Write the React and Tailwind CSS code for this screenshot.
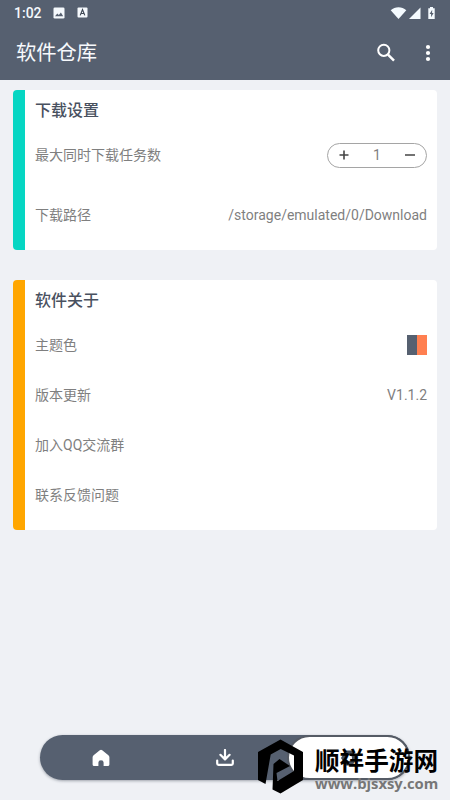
const aboutRows = [
  { label: '主题色', swatch: true },
  { label: '版本更新', value: 'V1.1.2' },
  { label: '加入QQ交流群' },
  { label: '联系反馈问题' },
];

function StatusBar() {
  return (
    <div className="flex h-[25px] items-center justify-between px-[14px]">
      <div className="flex items-center">
        <span className="w-[39px] text-[14px] leading-6 font-medium text-[#f5f9fd]">1:02</span>
        <svg className="h-3 w-3" viewBox="0 0 12 12">
          <rect x="0.5" y="0.5" width="11" height="11" rx="1.3" fill="#f5f9fd" />
          <path d="M2 9.2 4.3 6.4 5.8 8 7.9 5.6 10.2 9.2Z" fill="#566070" />
        </svg>
        <svg className="ml-3 h-[11px] w-[11px]" viewBox="0 0 11 11">
          <rect x="0.5" y="0.5" width="10" height="10" rx="1" fill="#f5f9fd" />
          <path d="M3.2 8.4 5.5 2.6 7.8 8.4M4 6.5h3" fill="none" stroke="#3f4855" strokeWidth="1.2" />
        </svg>
      </div>
      <svg className="h-3 w-[46px]" viewBox="0 0 46 12">
        <path d="M0.7 3.2C5-.8 12-.8 16.3 3.2L8.5 12Z" fill="#f5fbff" />
        <path d="M30.5 0.5V12H19Z" fill="#f5fbff" />
        <path d="M38.3 1.3h1.7V0h3v1.3h1.7V12h-6.4Z" fill="#f5fbff" />
        <path d="M42.2 2.8 39.6 7h1.5v3.2L43.6 6h-1.5Z" fill="#566070" />
      </svg>
    </div>
  );
}

function AppBar() {
  return (
    <header className="flex h-[55px] items-center justify-between pl-4 pr-5">
      <h1 className="text-[20.3px] leading-7 font-normal text-[#f7f9fc]">软件仓库</h1>
      <div className="flex items-center gap-7">
        <svg className="h-5 w-5" viewBox="0 0 20 20" fill="none" stroke="#fff">
          <circle cx="7.8" cy="7.3" r="5.6" strokeWidth="2" />
          <path d="m12 11.6 6 6" strokeWidth="2.4" />
        </svg>
        <svg className="-mr-2 h-5 w-[14px]" viewBox="0 0 14 20" fill="#fff">
          <circle cx="4" cy="4" r="2.1" />
          <circle cx="4" cy="10" r="2.1" />
          <circle cx="4" cy="16" r="2.1" />
        </svg>
      </div>
    </header>
  );
}

function Card({ accent, title, children }) {
  return (
    <section className="flex overflow-hidden rounded-[4px] bg-white">
      <div className={accent} />
      <div className="flex-1 px-[10px]">
        <h2 className="h-10 text-[16px] leading-[42px] font-medium text-[#49515f]">{title}</h2>
        {children}
      </div>
    </section>
  );
}

function Stepper() {
  return (
    <div className="flex h-[25px] w-[100px] items-center justify-between rounded-full border border-[#a5a5a5] px-[10px]">
      <svg className="h-3 w-3" viewBox="0 0 12 12">
        <path d="M1.5 6h9M6 1.5v9" stroke="#454545" strokeWidth="1.6" />
      </svg>
      <span className="pt-px">1</span>
      <svg className="h-3 w-3" viewBox="0 0 12 12">
        <path d="M1 6h10" stroke="#454545" strokeWidth="1.6" />
      </svg>
    </div>
  );
}

function BottomNav() {
  return (
    <nav className="flex h-[45px] w-[370px] items-center rounded-full bg-[#566070] shadow-[0_1px_3px_rgba(40,50,65,0.4)]">
      <div className="flex flex-1 justify-center">
        <svg className="mr-px h-[18px] w-[18px]" viewBox="0 0 18 18" fill="#fff">
          <path d="M9 .8Q9.6.8 10.2 1.3L16.4 6.2Q17.4 7 17.4 8.2V15.4Q17.4 17 15.8 17H11.6V13.4Q11.6 11.2 9 11.2Q6.4 11.2 6.4 13.4V17H2.2Q.6 17 .6 15.4V8.2Q.6 7 1.6 6.2L7.8 1.3Q8.4.8 9 .8Z" />
        </svg>
      </div>
      <div className="flex flex-1 justify-center">
        <svg className="h-[18px] w-[18px]" viewBox="0 0 18 18" fill="none" stroke="#fff" strokeWidth="2.2" strokeLinecap="round" strokeLinejoin="round">
          <path d="M9 1v9M4.4 5.8 9 10.4l4.6-4.6M1.2 11.5V14.6q0 1.3 1.3 1.3h13q1.3 0 1.3-1.3v-3.1" />
        </svg>
      </div>
      <div className="flex h-full w-[123px] items-center justify-center rounded-full border-2 border-[#555b65] bg-white">
        <svg className="h-[18px] w-[18px]" viewBox="0 0 18 18">
          <path d="M5.5 1.5h7L17 9l-4.5 7.5h-7L1 9Z" fill="#454d59" />
          <circle cx="9" cy="9" r="3" fill="#fff" />
        </svg>
      </div>
    </nav>
  );
}

function Watermark() {
  return (
    <div className="absolute top-[739px] left-[258px] flex">
      <svg className="h-[55px] w-[45px]" viewBox="0 0 45 55">
        <path
          d="M22.5 .5 45 13V41L22.5 54.5 14.5 50.5 15.5 25 21.5 20 32 27 18.5 34 19.5 42 36 32V16.5L22.7 10 12.7 15.5 7.5 45 0 41V13Z"
          fill="#000"
        />
      </svg>
      <div className="ml-3 w-[124px] pt-2 whitespace-nowrap">
        <div className="h-[28px] text-[24.6px] leading-[29px] font-bold text-black">顺祥手游网</div>
        <div className="font-['Open_Sans',sans-serif] text-[14.8px] leading-4 font-bold text-[#777]">www.bjsxsy.com</div>
      </div>
    </div>
  );
}

export default function App() {
  return (
    <div className="relative flex h-[800px] w-[450px] flex-col overflow-hidden bg-[#eff1f5] font-[Roboto,'Noto_Sans_CJK_SC',sans-serif]">
      <div className="h-20 shrink-0 bg-[#566070]">
        <StatusBar />
        <AppBar />
      </div>
      <main className="flex flex-1 flex-col gap-[30px] px-[13px] pt-[10px] text-[14px] text-[#7f7f7f]">
        <Card accent="w-3 bg-[#06d6c3]" title="下载设置">
          <div className="flex h-[50px] items-center justify-between">
            <span className="pt-px">最大同时下载任务数</span>
            <Stepper />
          </div>
          <div className="flex h-[70px] items-center justify-between pt-px">
            <span>下载路径</span>
            <span>/storage/emulated/0/Download</span>
          </div>
        </Card>
        <Card accent="w-3 bg-[#ffa600]" title="软件关于">
          {aboutRows.map((row) => (
            <div key={row.label} className="flex h-[50px] items-center justify-between">
              <span className="pt-px">{row.label}</span>
              {row.swatch && (
                <span className="flex h-5 w-5">
                  <span className="w-1/2 bg-[#566070]" />
                  <span className="w-1/2 bg-[#ff7f50]" />
                </span>
              )}
              {row.value && <span className="pt-px">{row.value}</span>}
            </div>
          ))}
          <div className="h-[10px]" />
        </Card>
      </main>
      <div className="flex justify-center pb-5">
        <BottomNav />
      </div>
      <Watermark />
    </div>
  );
}
